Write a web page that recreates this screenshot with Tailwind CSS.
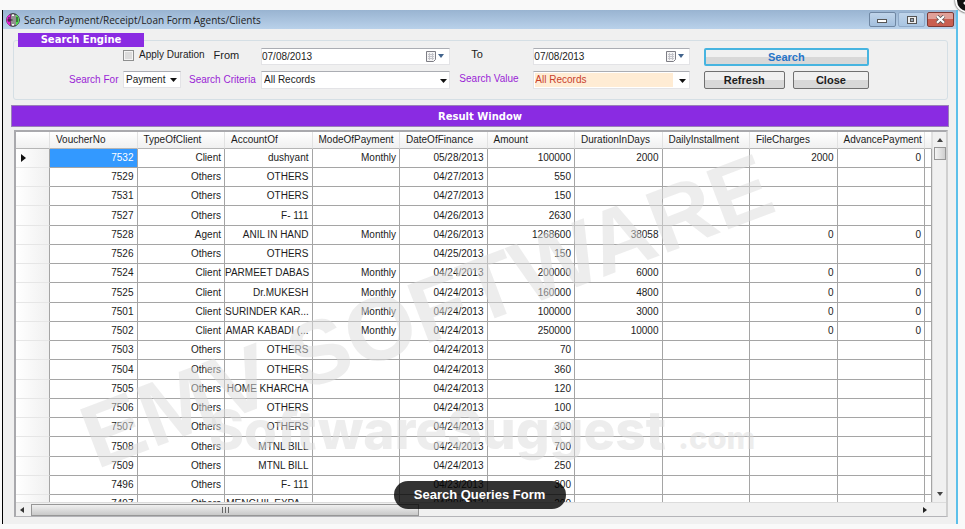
<!DOCTYPE html>
<html lang="en">
<head>
<meta charset="utf-8">
<title>Search Payment/Receipt/Loan Form Agents/Clients</title>
<script src="https://cdn.jsdelivr.net/npm/@tailwindcss/browser@4"></script>
</head>
<body class="relative h-screen overflow-hidden bg-[#f9f9f9] flex flex-col pt-[10px] pb-[5px] pl-[2px] pr-[7px] font-['Liberation_Sans',sans-serif] text-[10px] leading-[14px] text-[#1c1c1c]">
<main class="relative flex-1 min-h-0 flex flex-col bg-[#f0f0f0] border-l border-l-black border-r-2 border-r-[#5cc0ea]">

  <header class="h-[19px] shrink-0 flex items-center pl-[3px] pr-[2px] bg-linear-to-b from-[#99b4d1] to-[#b9d1ea]">
    <svg class="size-[14px] shrink-0" viewBox="0 0 14 14" aria-hidden="true">
      <circle cx="7" cy="7" r="6.3" fill="#fff" stroke="#222"/>
      <path d="M5 1.2A6 6 0 0 0 5 12.8z" fill="#e61fd0"/>
      <path d="M10 1.800A6 6 0 0 1 10 12.2z" fill="#4be04b"/>
      <path d="M5 1v12M9 1v12M7 3v8M1.500 7h5M3 4v5M11 4v5" stroke="#222" fill="none"/>
    </svg>
    <h1 class="ml-[4px] flex-1 font-['Open_Sans',sans-serif] text-[10px] leading-[16px] text-[#222]">Search Payment/Receipt/Loan Form Agents/Clients</h1>
    <div class="flex gap-[2px]">
      <button aria-label="Minimize" class="w-[27px] h-[15px] grid place-items-center rounded-[2px] border border-[#6f87a3] bg-linear-to-b from-[#bfd4ea] to-[#a3bfdd]"><svg width="11" height="9" viewBox="0 0 11 9"><rect x=".5" y="4.5" width="9" height="3" fill="#fff" stroke="#555"/></svg></button>
      <button aria-label="Maximize" class="w-[27px] h-[15px] grid place-items-center rounded-[2px] border border-[#90aac8] bg-linear-to-b from-[#bfd4ea] to-[#a9c5e2]"><svg width="10" height="8" viewBox="0 0 10 8"><rect x=".5" y=".5" width="9" height="7" fill="#eee" stroke="#555"/><rect x="3.5" y="2.5" width="3" height="3" fill="#9ab" stroke="#555"/></svg></button>
      <button aria-label="Close window" class="w-[27px] h-[15px] grid place-items-center rounded-[2px] border border-[#7d3a35] bg-linear-to-b from-[#e0a098] from-50% to-[#c95f50] to-50%"><svg width="11" height="9" viewBox="0 0 11 9"><path d="M2 1.2l7 6.6M9 1.2l-7 6.6" stroke="#555" stroke-width="3.6"/><path d="M2 1.2l7 6.6M9 1.2l-7 6.6" stroke="#fff" stroke-width="2.2"/></svg></button>
    </div>
  </header>

  <fieldset class="mt-[4px] ml-[10px] mr-[8px] h-[67px] shrink-0 rounded-[3px] border border-[#d5dfe5]">
    <legend class="ml-[4px] mr-auto w-[126px] h-[14px] bg-[#8a2be2] text-center font-['DejaVu_Sans',sans-serif] font-bold text-[10px] leading-[14px] text-white">Search Engine</legend>
    <div class="grid grid-cols-[109px_138px_minmax(0,189fr)_83px_minmax(0,156fr)_14px_minmax(0,165fr)_78px] gap-y-[5px] pt-px">
      <div></div>
      <div class="flex items-start">
        <input id="dur" type="checkbox" class="appearance-none shrink-0 size-[11px] mt-[2px] border border-[#8e8f8f] bg-[#dcdcdc] shadow-[inset_0_0_0_1px_#f4f4f4]">
        <label for="dur" class="ml-[5px] whitespace-nowrap">Apply Duration</label>
        <label for="from" class="ml-[9px] text-[11px]">From</label>
      </div>
      <div class="h-[17px] flex items-center bg-white border border-[#e3e3e6] border-t-[#abadb3]">
        <input id="from" value="07/08/2013" class="flex-1 min-w-0 bg-transparent outline-none">
        <svg class="mr-[4px]" width="20" height="13" viewBox="0 0 20 13" aria-hidden="true"><path d="M1.500 1.500h9v8l-2 2h-7z" fill="#f4f4f4" stroke="#7d7d85"/><path d="M3 4.500h6M3 6.500h6M3 8.500h6M4.500 3v7M7.500 3v7" stroke="#c4c4ca" fill="none"/><path d="M13 4h6l-3 4z" fill="#41638c"/></svg>
      </div>
      <label for="to" class="pl-[21px] text-[11px] leading-[12px]">To</label>
      <div class="h-[17px] flex items-center bg-white border border-[#e3e3e6] border-t-[#abadb3]">
        <input id="to" value="07/08/2013" class="flex-1 min-w-0 bg-transparent outline-none">
        <svg class="mr-[4px]" width="20" height="13" viewBox="0 0 20 13" aria-hidden="true"><path d="M1.500 1.500h9v8l-2 2h-7z" fill="#f4f4f4" stroke="#7d7d85"/><path d="M3 4.500h6M3 6.500h6M3 8.500h6M4.500 3v7M7.500 3v7" stroke="#c4c4ca" fill="none"/><path d="M13 4h6l-3 4z" fill="#41638c"/></svg>
      </div>
      <div></div>
      <button class="h-[18px] rounded-[2px] border-2 border-[#46b4e0] bg-linear-to-b from-[#f0f0f0] from-50% to-[#d8d8d8] to-50% font-bold text-[11px] leading-[14px] text-[#2674c8]">Search</button>
      <div></div>

      <label for="for" class="pl-[55px] pt-[2px] whitespace-nowrap text-[#9a1fd6]">Search For</label>
      <div class="flex items-start">
        <div class="relative">
          <select id="for" class="appearance-none block w-[58px] h-[17px] px-[2px] leading-[14px] bg-white border border-[#e3e3e6] border-t-[#abadb3]"><option>Payment</option></select>
          <svg class="absolute right-[4px] top-[7px] pointer-events-none" width="7" height="4" viewBox="0 0 7 4"><path d="M0 0h7L3.500 4z" fill="#111"/></svg>
        </div>
        <label for="crit" class="ml-[8px] pt-[2px] whitespace-nowrap text-[#9a1fd6]">Search Criteria</label>
      </div>
      <div class="relative">
        <select id="crit" class="appearance-none block w-full h-[18px] px-[2px] leading-[14px] bg-white border border-[#e3e3e6] border-t-[#abadb3]"><option>All Records</option></select>
        <svg class="absolute right-[3px] top-[8px] pointer-events-none" width="7" height="4" viewBox="0 0 7 4"><path d="M0 0h7L3.500 4z" fill="#111"/></svg>
      </div>
      <label for="val" class="pl-[9px] pt-px whitespace-nowrap text-[#9a1fd6]">Search Value</label>
      <div class="relative h-[18px] bg-white border border-[#e3e3e6] border-t-[#abadb3] p-px pr-[16px]">
        <select id="val" class="appearance-none block w-full h-[14px] leading-[14px] bg-[#ffecd4] text-[#c8402c]"><option>All Records</option></select>
        <svg class="absolute right-[3px] top-[7px] pointer-events-none" width="7" height="4" viewBox="0 0 7 4"><path d="M0 0h7L3.500 4z" fill="#111"/></svg>
      </div>
      <div></div>
      <div class="grid grid-cols-[81fr_76fr] gap-[8px] font-bold text-[11px] leading-[14px]">
        <button class="h-[18px] rounded-[2px] border border-[#707070] bg-linear-to-b from-[#f0f0f0] from-50% to-[#d8d8d8] to-50%">Refresh</button>
        <button class="h-[18px] rounded-[2px] border border-[#707070] bg-linear-to-b from-[#f0f0f0] from-50% to-[#d8d8d8] to-50%">Close</button>
      </div>
    </div>
  </fieldset>

  <h2 class="mt-[5px] ml-[8px] mr-[7px] h-[22px] shrink-0 border border-[#9a80b8] bg-[#8a2be2] text-center font-['DejaVu_Sans',sans-serif] font-bold text-[10px] leading-[21px] text-white">Result Window</h2>

  <section class="mt-[3px] ml-[11px] mr-[8px] mb-[7px] flex-1 min-h-0 flex flex-col border-2 border-[#a9a9ad] border-r-[#cfcfcf] border-b-[#b4b4b8] border-b">
    <div class="flex-1 min-h-0 flex">
      <div class="flex-1 min-w-0 overflow-hidden bg-white">
        <table class="w-full table-fixed border-separate border-spacing-0">
          <colgroup><col class="w-[34px]"><col><col><col><col><col><col><col><col><col><col><col class="w-[7px]"></colgroup>
          <thead class="text-left [&_th]:font-normal [&_th]:h-[17px] [&_th]:p-0 [&_th]:pl-[6px] [&_th]:whitespace-nowrap [&_th]:border-r [&_th]:border-r-[#e2e2e2] [&_th]:border-b [&_th]:border-b-[#b5b5b5] [&_th]:bg-linear-to-b [&_th]:from-white [&_th]:to-[#f0f0f0]">
            <tr><th></th><th>VoucherNo</th><th>TypeOfClient</th><th>AccountOf</th><th>ModeOfPayment</th><th>DateOfFinance</th><th>Amount</th><th>DurationInDays</th><th>DailyInstallment</th><th>FileCharges</th><th>AdvancePayment</th><th></th></tr>
          </thead>
          <tbody id="rows" class="text-right [&_td]:h-[19px] [&_tr:nth-child(4n)_td]:h-[20px] [&_td]:p-0 [&_td]:pr-[3px] [&_td]:whitespace-nowrap [&_td]:border-r [&_td]:border-b [&_td]:border-[#a5a5a5] [&_th]:p-0 [&_th]:pl-[5px] [&_th]:border-r [&_th]:border-r-[#a5a5a5] [&_th]:border-b [&_th]:border-b-[#e6e6e6] [&_th]:bg-linear-to-r [&_th]:from-white [&_th]:to-[#f0f0f0]"></tbody>
        </table>
      </div>
      <div class="w-[14px] shrink-0 flex flex-col items-center bg-[#f0f0f0] border-l border-[#e0e0e0]">
        <svg class="mt-[6px]" width="6" height="4" viewBox="0 0 6 4"><path d="M0 4h6L3 0z" fill="#444"/></svg>
        <div class="mt-[5px] w-[12px] h-[13px] border border-[#979797] bg-linear-to-r from-[#f4f4f4] to-[#cfcfcf]"></div>
        <svg class="mt-auto mb-[6px]" width="6" height="4" viewBox="0 0 6 4"><path d="M0 0h6L3 4z" fill="#444"/></svg>
      </div>
    </div>
    <div class="h-[14px] shrink-0 flex items-center bg-[#f0f0f0] border-t border-[#dcdcdc]">
      <svg class="ml-[4px]" width="4" height="6" viewBox="0 0 4 6"><path d="M4 0v6L0 3z" fill="#333"/></svg>
      <div class="ml-[7px] w-5/12 h-[12px] grid place-items-center border border-[#979797] bg-linear-to-b from-[#f0f0f0] to-[#c9c9c9]"><svg width="8" height="6" viewBox="0 0 8 6"><path d="M1.500 0v6M4.500 0v6M7.500 0v6" stroke="#666"/></svg></div>
      <svg class="ml-auto mr-[19px]" width="4" height="6" viewBox="0 0 4 6"><path d="M0 0v6L4 3z" fill="#222"/></svg>
    </div>
  </section>
</main>

<svg class="absolute left-0 top-0 pointer-events-none" width="965" height="529" viewBox="0 0 965 529" aria-hidden="true">
  <g fill="#dcdcdc" fill-opacity=".5">
    <text x="96" y="467" transform="rotate(-20.800 103 467)" class="font-['Liberation_Sans',sans-serif] font-bold text-[90px]">EMV SOFTWARE</text>
    <text x="209" y="449" class="font-[Inter,sans-serif] font-extrabold text-[53px]">SoftwareSuggest</text>
    <text x="678" y="449" class="font-[Inter,sans-serif] font-extrabold text-[31px]">.com</text>
  </g>
</svg>

<p class="absolute left-1/2 -translate-x-1/2 -ml-[3px] bottom-[20px] w-[172px] h-[28px] rounded-full bg-black/80 text-center font-bold text-[13px] leading-[27px] text-white">Search Queries Form</p>

<button aria-label="Close preview" class="absolute -right-[15px] -top-[12px] size-[25px] rounded-full border-2 border-white bg-[#111] shadow-[0_0_2px_#000]">
  <svg class="size-full" viewBox="0 0 21 21"><path d="M7 7l7 7M14 7l-7 7" stroke="#fff" stroke-width="2.500"/></svg>
</button>

<script>
const data = [
  ["7532","Client","dushyant","Monthly","05/28/2013","100000","2000","","2000","0"],
  ["7529","Others","OTHERS","","04/27/2013","550","","","",""],
  ["7531","Others","OTHERS","","04/27/2013","150","","","",""],
  ["7527","Others","F- 111","","04/26/2013","2630","","","",""],
  ["7528","Agent","ANIL IN HAND","Monthly","04/26/2013","1268600","38058","","0","0"],
  ["7526","Others","OTHERS","","04/25/2013","150","","","",""],
  ["7524","Client","PARMEET DABAS","Monthly","04/24/2013","200000","6000","","0","0"],
  ["7525","Client","Dr.MUKESH","Monthly","04/24/2013","160000","4800","","0","0"],
  ["7501","Client","SURINDER KAR...","Monthly","04/24/2013","100000","3000","","0","0"],
  ["7502","Client","AMAR KABADI (...","Monthly","04/24/2013","250000","10000","","0","0"],
  ["7503","Others","OTHERS","","04/24/2013","70","","","",""],
  ["7504","Others","OTHERS","","04/24/2013","360","","","",""],
  ["7505","Others","HOME KHARCHA","","04/24/2013","120","","","",""],
  ["7506","Others","OTHERS","","04/24/2013","100","","","",""],
  ["7507","Others","OTHERS","","04/24/2013","300","","","",""],
  ["7508","Others","MTNL BILL","","04/24/2013","700","","","",""],
  ["7509","Others","MTNL BILL","","04/24/2013","250","","","",""],
  ["7496","Others","F- 111","","04/23/2013","300","","","",""],
  ["7497","Others","MENGHIL EXPA...","","04/20/2013","200","","","",""]
];
const marker = '<svg width="5" height="8" viewBox="0 0 5 8"><path d="M0 0v8l5-4z" fill="#111"/></svg>';
document.getElementById("rows").innerHTML = data.map((row, i) =>
  "<tr><th>" + (i ? "" : marker) + "</th>" +
  row.map((v, j) => (i + j ? "<td>" : '<td class="bg-[#3399ff] text-white">') + v + "</td>").join("") +
  "<td></td></tr>").join("");
</script>
</body>
</html>
